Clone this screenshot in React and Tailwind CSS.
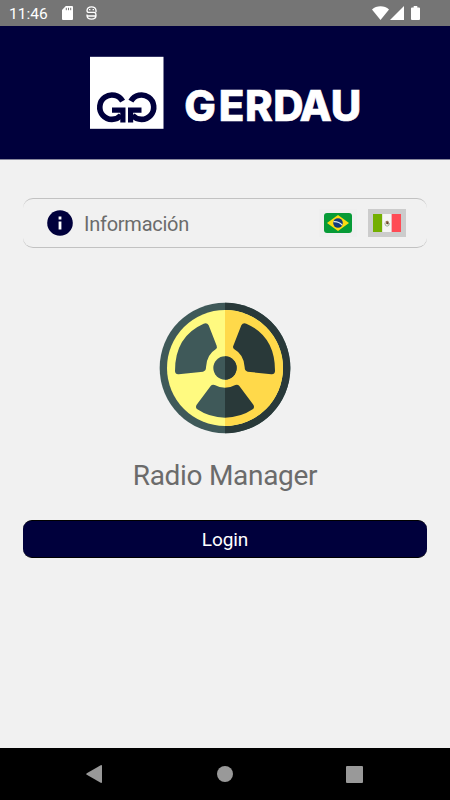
import { useState } from 'react';

function StatusBar() {
  return (
    <div className="flex h-[26px] shrink-0 items-center bg-[#757575] pl-[9px] pr-[29px] text-white">
      <span className="w-[39px] whitespace-nowrap pt-px text-[15.5px] leading-[26px]">11:46</span>
      <svg className="ml-[14px] h-[14px] w-[11px]" viewBox="0 0 11 14">
        <path d="M3.8 0H10a1 1 0 0 1 1 1v12a1 1 0 0 1-1 1H1a1 1 0 0 1-1-1V4z" fill="#fff" />
        <path d="M4.3 1.8v2.4M6.5 1.8v2.4M8.7 1.8v2.4" stroke="#757575" strokeWidth="1" />
      </svg>
      <svg className="ml-[13px] h-[14px] w-[11px]" viewBox="0 0 11 14" fill="none" stroke="#fff" strokeWidth="1.3">
        <path d="M10 6.2V4.4Q9.6.8 5.5.8T1 4.4q0 2 2 2h5q2 0 2 3 0 3.7-4.5 3.7T1 9.6V8.5M1 10h9" />
        <path d="M3 3.7h1.4M6.6 3.7H8" />
      </svg>
      <div className="ml-auto flex items-center">
        <svg className="h-[14px] w-[17px]" viewBox="0 0 17 14" fill="#fff">
          <path d="M0 3.5Q3.5.2 8.5.2T17 3.5L8.5 14z" />
        </svg>
        <svg className="ml-px h-[14px] w-[14px]" viewBox="0 0 14 14" fill="#fff">
          <path d="M14 0v14H0z" />
        </svg>
        <svg className="ml-[7px] mr-px h-[14px] w-[9px]" viewBox="0 0 9 14" fill="#fff">
          <path d="M2.7 0h3.6v1.4H8a1 1 0 0 1 1 1V13a1 1 0 0 1-1 1H1a1 1 0 0 1-1-1V2.4a1 1 0 0 1 1-1h1.7z" />
        </svg>
      </div>
    </div>
  );
}

function GerdauLogo() {
  return (
    <svg className="h-[90px] w-[290px]" viewBox="0 0 290 90">
      <rect x="0" y="0.8" width="73.5" height="72" fill="#fff" />
      <g fill="none" stroke="#00003c" strokeWidth="5.6">
        <path d="M32.6 45.2A12.2 12.2 0 1 0 31 59.4" />
        <path d="M22 54.2H32.9V66.4" strokeWidth="5.2" />
        <path d="M40.9 45.2A12.2 12.2 0 1 1 42.5 59.4" />
        <path d="M51.5 54.2H40.6V66.4" strokeWidth="5.2" />
      </g>
      <text
        x="94.3 128.7 155 183.2 209.5 240.8" y="65.2" fill="#fff" stroke="#fff" strokeWidth="0.6"
        className="font-['Inter'] text-[42px] font-extrabold"
      >
        GERDAU
      </text>
    </svg>
  );
}

function BrazilFlag() {
  return (
    <svg className="h-[20px] w-[28px]" viewBox="0 0 28 20">
      <rect x="0" y="0" width="28" height="20" rx="3" fill="#079b37" />
      <path d="M3 10 14 2l11 8-11 8z" fill="#fddb12" />
      <circle cx="14" cy="10" r="4.8" fill="#143a7b" />
      <path d="M9.5 8.7q5-.5 8.7 3.4" fill="none" stroke="#dce8f2" strokeWidth="1.2" />
    </svg>
  );
}

function MexicoFlag() {
  return (
    <svg className="h-[18px] w-[28px]" viewBox="0 0 28 18">
      <rect x="0" y="0" width="9.3" height="18" fill="#73af00" />
      <rect x="9.3" y="0" width="9.4" height="18" fill="#f5f5f5" />
      <rect x="18.7" y="0" width="9.3" height="18" fill="#ff4b55" />
      <path d="M11.8 8.8q.1 3.4 2.3 3.4t2.4-3" fill="none" stroke="#8fa88a" strokeWidth="0.9" />
      <path d="M12.4 7.7q2.2-2 3.4.2l-.4 2.6-2.2-.4z" fill="#9a7559" />
      <circle cx="14.6" cy="9.1" r="0.9" fill="#563d31" />
    </svg>
  );
}

function RadiationIcon() {
  return (
    <svg className="h-[132px] w-[132px]" viewBox="27 22 396 396">
      <circle cx="225" cy="220" r="196" fill="#3f5959" />
      <path d="M225 24a196 196 0 0 1 0 392z" fill="#293939" />
      <circle cx="225" cy="220" r="174" fill="#fffa80" />
      <path d="M225 46a174 174 0 0 1 0 348z" fill="#ffd94a" />
      <path d="M161 87q10-4 15 5l24 61q3 7-3 11-27 16-29 54 0 11-9 13l-73 8q-10 1-11-9-1-105 86-143z" fill="#3f5959" />
      <path d="M289 87q-10-4-15 5l-24 61q-3 7 3 11 29 16 31 54 0 11 9 13l71 8q10 1 11-9 1-105-86-143z" fill="#293939" />
      <path d="M225 279q-17 0-31-8-7-3-12 3l-42 56q-5 8 2 14 37 25 83 25z" fill="#3f5959" />
      <path d="M225 279q17 0 31-8 7-3 12 3l42 56q5 8-2 14-37 25-83 25z" fill="#293939" />
      <circle cx="225" cy="220" r="35" fill="#3f5959" />
      <path d="M225 185a35 35 0 0 1 0 70z" fill="#293939" />
    </svg>
  );
}

function InfoBar() {
  const [lang, setLang] = useState('es');

  return (
    <div className="flex h-[50px] w-[404px] items-center rounded-[10px] border-y border-[#c2c2c2] pl-[24px] pr-[21px]">
      <svg className="h-[26px] w-[26px]" viewBox="0 0 26 26">
        <circle cx="13" cy="13" r="12.8" fill="#00003c" />
        <path d="M11.6 6.6h2.8v2.8h-2.8zM11.6 11.4h2.8v8h-2.8z" fill="#fff" />
      </svg>
      <span className="ml-[11px] pt-[2px] text-[20px] leading-[24px] tracking-[-0.25px] text-[#6b6b6b]">Información</span>
      <div className="ml-auto flex gap-[11px]">
        <button
          type="button" aria-label="Português" onClick={() => setLang('pt')}
          className={lang === 'pt' ? 'flex h-[28px] w-[38px] items-center justify-center bg-[#cccccc]' : 'flex h-[28px] w-[38px] items-center justify-center bg-[#efefef]'}
        >
          <BrazilFlag />
        </button>
        <button
          type="button" aria-label="Español" onClick={() => setLang('es')}
          className={lang === 'es' ? 'flex h-[28px] w-[38px] items-center justify-center bg-[#cccccc]' : 'flex h-[28px] w-[38px] items-center justify-center bg-[#efefef]'}
        >
          <MexicoFlag />
        </button>
      </div>
    </div>
  );
}

function NavBar() {
  return (
    <div className="flex h-[52px] shrink-0 items-center justify-between bg-black pl-[86px] pr-[87px]">
      <svg className="h-[18px] w-[16px]" viewBox="0 0 16 18">
        <path d="M.8 8.2 14.7.2q1.3-.5 1.3.8v16q0 1.3-1.3.8L.8 9.8q-1.2-.8 0-1.6z" fill="#999" />
      </svg>
      <div className="ml-px h-[16px] w-[16px] rounded-full bg-[#999999]" />
      <div className="h-[17px] w-[17px] rounded-[1px] bg-[#999999]" />
    </div>
  );
}

export default function App() {
  return (
    <div className="flex h-[800px] w-[450px] flex-col overflow-hidden bg-[#f1f1f1] font-['Roboto',sans-serif]">
      <StatusBar />
      <header className="flex h-[134px] shrink-0 items-start border-b border-[#88889c] bg-[#00003c] pl-[90px] pt-[30px]">
        <GerdauLogo />
      </header>

      <main className="flex flex-1 flex-col items-center pt-[38px]">
        <InfoBar />
        <div className="mt-[54px]">
          <RadiationIcon />
        </div>
        <h1 className="mt-[24px] text-[28px] leading-[36px] tracking-[-0.3px] text-[#6b6b6b]">Radio Manager</h1>
        <button type="button" className="mt-[26px] h-[38px] w-[404px] rounded-[9px] border-y border-black bg-[#00003c] pt-[2px] text-[19px] leading-[34px] tracking-[-0.1px] text-white">
          Login
        </button>
      </main>

      <NavBar />
    </div>
  );
}
